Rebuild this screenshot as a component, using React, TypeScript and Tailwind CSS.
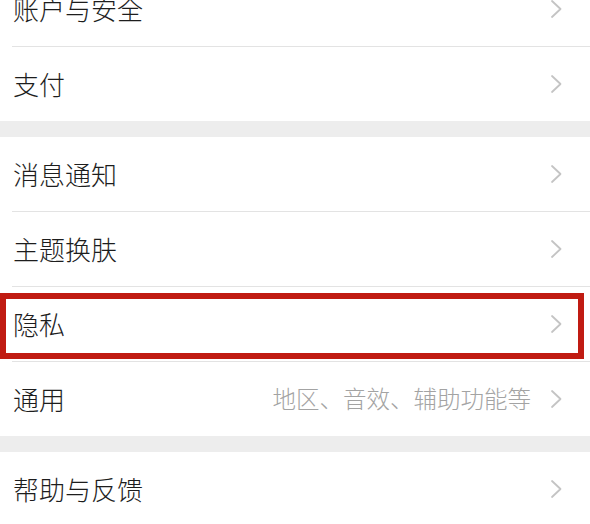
import React from 'react';

type Item = { label: string; hint?: string; marked?: boolean };

const groups: Item[][] = [
  [{ label: '账户与安全' }, { label: '支付' }],
  [
    { label: '消息通知' },
    { label: '主题换肤' },
    { label: '隐私', marked: true },
    { label: '通用', hint: '地区、音效、辅助功能等' },
  ],
  [{ label: '帮助与反馈' }],
];

function Chevron() {
  return (
    <svg width="13" height="20" viewBox="0 0 13 20" fill="none" className="shrink-0">
      <path d="M2 2l8.5 8-8.5 8" stroke="#c4c4c4" strokeWidth="1.8" strokeLinecap="round" strokeLinejoin="round" />
    </svg>
  );
}

function Row({ item }: { item: Item }) {
  return (
    <div className="relative flex h-[74px] items-center bg-white pl-[13px] pr-[27px]">
      <span className="flex-1 text-[26px] font-light leading-none text-[#1d1d1d]">{item.label}</span>
      {item.hint && (
        <span className="mr-[19px] text-[23.5px] font-light leading-none text-[#a3a3a3]">{item.hint}</span>
      )}
      <Chevron />
      {/* highlight box drawn over the row */}
      {item.marked && (
        <div className="pointer-events-none absolute left-0 right-[6px] top-[6px] bottom-[2px] border-[6px] border-[#c01b12]" />
      )}
    </div>
  );
}

export default function App() {
  return (
    <div
      className="h-[524px] w-[590px] overflow-hidden bg-white"
      style={{ fontFamily: '"Noto Sans CJK SC", "Noto Sans", sans-serif' }}
    >
      <div className="-mt-[28px]">
        {groups.map((group, gi) => (
          <div key={gi}>
            {gi > 0 && <div className="h-[16px] bg-[#ededed]" />}
            {group.map((item, i) => (
              <div key={item.label}>
                {i > 0 && <div className="ml-[12px] h-px bg-[#e3e3e3]" />}
                <Row item={item} />
              </div>
            ))}
          </div>
        ))}
      </div>
    </div>
  );
}
